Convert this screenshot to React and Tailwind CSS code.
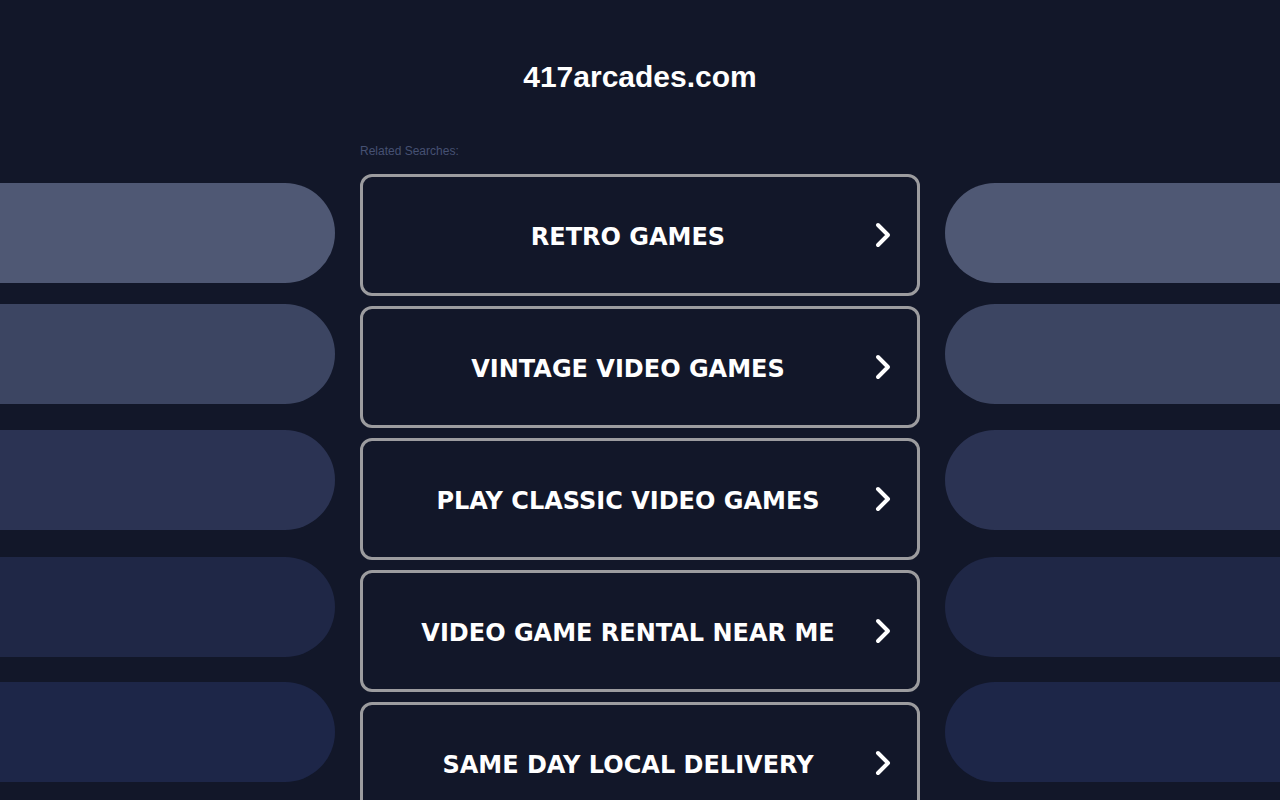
import React from "react";

const links = [
  "RETRO GAMES",
  "VINTAGE VIDEO GAMES",
  "PLAY CLASSIC VIDEO GAMES",
  "VIDEO GAME RENTAL NEAR ME",
  "SAME DAY LOCAL DELIVERY",
];

// decorative side bars, fading from light slate to deep navy
const pills = [
  "mt-[183px] bg-[#4f5874]",
  "mt-[21px] bg-[#3c4562]",
  "mt-[26px] bg-[#2b3353]",
  "mt-[27px] bg-[#1f2746]",
  "mt-[25px] bg-[#1d2648]",
];

function Chevron() {
  return (
    <svg width="20" height="28" viewBox="0 0 20 28" className="shrink-0">
      <path
        d="M5 4 L15 14 L5 24"
        fill="none"
        stroke="white"
        strokeWidth="4"
        strokeLinecap="round"
        strokeLinejoin="round"
      />
    </svg>
  );
}

function Side({ left }) {
  return (
    <div className="flex flex-col w-[335px] shrink-0">
      {pills.map((p) => (
        <div
          key={p}
          className={`h-[100px] ${p} ${left ? "rounded-r-full" : "rounded-l-full"}`}
        />
      ))}
    </div>
  );
}

export default function App() {
  return (
    <div className="h-[800px] overflow-hidden bg-[#121729] flex gap-[25px]">
      <Side left />
      <div className="w-[560px] shrink-0 flex flex-col">
        <h1 className="mt-[59px] text-center text-white font-bold text-[30px] leading-[36px] font-['Liberation_Sans',Arial,sans-serif]">
          417arcades.com
        </h1>
        <p className="mt-[48px] text-[12px] leading-[16px] text-[#465173] font-['Liberation_Sans',Arial,sans-serif]">
          Related Searches:
        </p>
        <div className="mt-[15px] flex flex-col gap-[10px]">
          {links.map((l) => (
            <a
              key={l}
              href="#"
              className="h-[122px] shrink-0 rounded-[12px] border-[3px] border-[#9c9c9f] flex items-center pl-[20px] pr-[24px]"
            >
              <span className="flex-1 pt-[4px] text-center text-white font-bold text-[24px] font-['DejaVu_Sans',Verdana,sans-serif]">
                {l}
              </span>
              <Chevron />
            </a>
          ))}
        </div>
      </div>
      <Side />
    </div>
  );
}
